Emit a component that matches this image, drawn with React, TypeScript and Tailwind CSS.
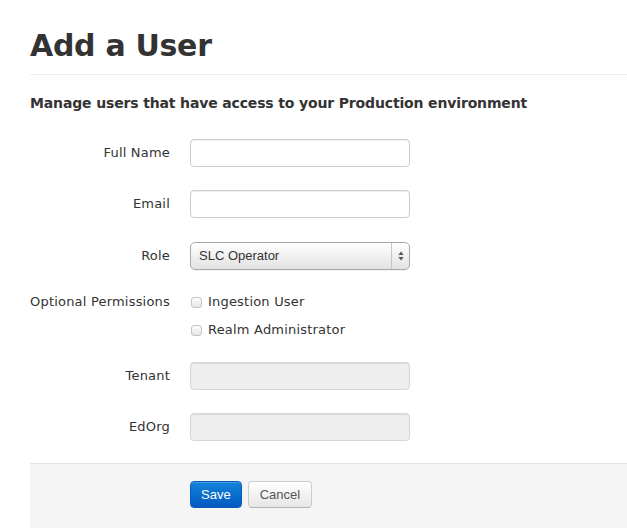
import React from "react";

const labelFont = { fontFamily: '"DejaVu Sans", Verdana, sans-serif' };
const uiFont = { fontFamily: '"Liberation Sans", Arial, sans-serif' };

function Label({ children }: { children: React.ReactNode }) {
  return (
    <div
      className="flex h-[28px] w-[140px] shrink-0 items-center justify-end text-[13px] tracking-[0.2px] text-[#333]"
      style={labelFont}
    >
      {children}
    </div>
  );
}

function TextInput({ disabled = false }: { disabled?: boolean }) {
  return (
    <div
      className={`h-[28px] w-[220px] rounded-[4px] border shadow-[inset_0_1px_1px_rgba(0,0,0,0.075)] ${
        disabled ? "border-[#d6d6d6] bg-[#eeeeee]" : "border-[#cccccc] bg-white"
      }`}
    />
  );
}

function Checkbox({ label }: { label: string }) {
  return (
    <div className="flex h-[28px] items-center">
      <span className="ml-[1px] h-[11px] w-[11px] rounded-[3px] border border-[#c4c4c4] bg-gradient-to-b from-[#fdfdfd] to-[#e6e6e6]" />
      <span className="ml-[6px] text-[13px] tracking-[0.2px] text-[#333]" style={labelFont}>
        {label}
      </span>
    </div>
  );
}

function RoleSelect() {
  return (
    <div className="flex h-[28px] w-[220px] items-stretch rounded-[5px] border border-[#a9a9a9] bg-gradient-to-b from-[#ffffff] to-[#e2e2e2] shadow-[0_1px_0_rgba(0,0,0,0.05)]">
      <div className="flex flex-1 items-center pl-[8px] text-[13px] text-[#333]" style={uiFont}>
        SLC Operator
      </div>
      <div className="flex w-[18px] items-center justify-center border-l border-[#c6c6c6]">
        <svg width="6" height="10" viewBox="0 0 6 10">
          <path d="M3 0.5 L5.6 4 H0.4 Z" fill="#555" />
          <path d="M3 9.5 L5.6 6 H0.4 Z" fill="#555" />
        </svg>
      </div>
    </div>
  );
}

function Row({ label, children, className = "" }: { label: string; children: React.ReactNode; className?: string }) {
  return (
    <div className={`flex items-start gap-[20px] ${className}`}>
      <Label>{label}</Label>
      {children}
    </div>
  );
}

export default function App() {
  return (
    <div className="min-h-[530px] w-full bg-white pl-[30px] text-[#333]">
      <h1
        className="pt-[28px] text-[30px] font-bold leading-[36px] tracking-[-0.3px] text-[#333]"
        style={labelFont}
      >
        Add a User
      </h1>
      <div className="mt-[10px] h-px w-full bg-[#eeeeee]" />

      <p
        className="mt-[18px] text-[14px] font-bold leading-[20px] tracking-[-0.15px] text-[#333]"
        style={labelFont}
      >
        Manage users that have access to your Production environment
      </p>

      <div className="mt-[26px] flex flex-col">
        <Row label="Full Name">
          <TextInput />
        </Row>
        <Row label="Email" className="mt-[23px]">
          <TextInput />
        </Row>
        <Row label="Role" className="mt-[24px]">
          <RoleSelect />
        </Row>
        <Row label="Optional Permissions" className="mt-[18px]">
          <div className="flex flex-col">
            <Checkbox label="Ingestion User" />
            <Checkbox label="Realm Administrator" />
          </div>
        </Row>
        <Row label="Tenant" className="mt-[18px]">
          <TextInput disabled />
        </Row>
        <Row label="EdOrg" className="mt-[23px]">
          <TextInput disabled />
        </Row>
      </div>

      <div className="mt-[22px] flex gap-[6px] border-t border-[#e5e5e5] bg-[#f5f5f5] pb-[20px] pl-[160px] pt-[17px]">
        <button
          className="h-[27px] rounded-[4px] border border-[#0a5cb4] bg-gradient-to-b from-[#1384dc] to-[#0559bf] px-[10px] text-[13px] text-white shadow-[inset_0_1px_0_rgba(255,255,255,0.2)]"
          style={uiFont}
        >
          Save
        </button>
        <button
          className="h-[27px] rounded-[4px] border border-[#cccccc] border-b-[#b3b3b3] bg-gradient-to-b from-[#ffffff] to-[#e6e6e6] px-[11px] text-[13px] text-[#555]"
          style={uiFont}
        >
          Cancel
        </button>
      </div>
    </div>
  );
}
